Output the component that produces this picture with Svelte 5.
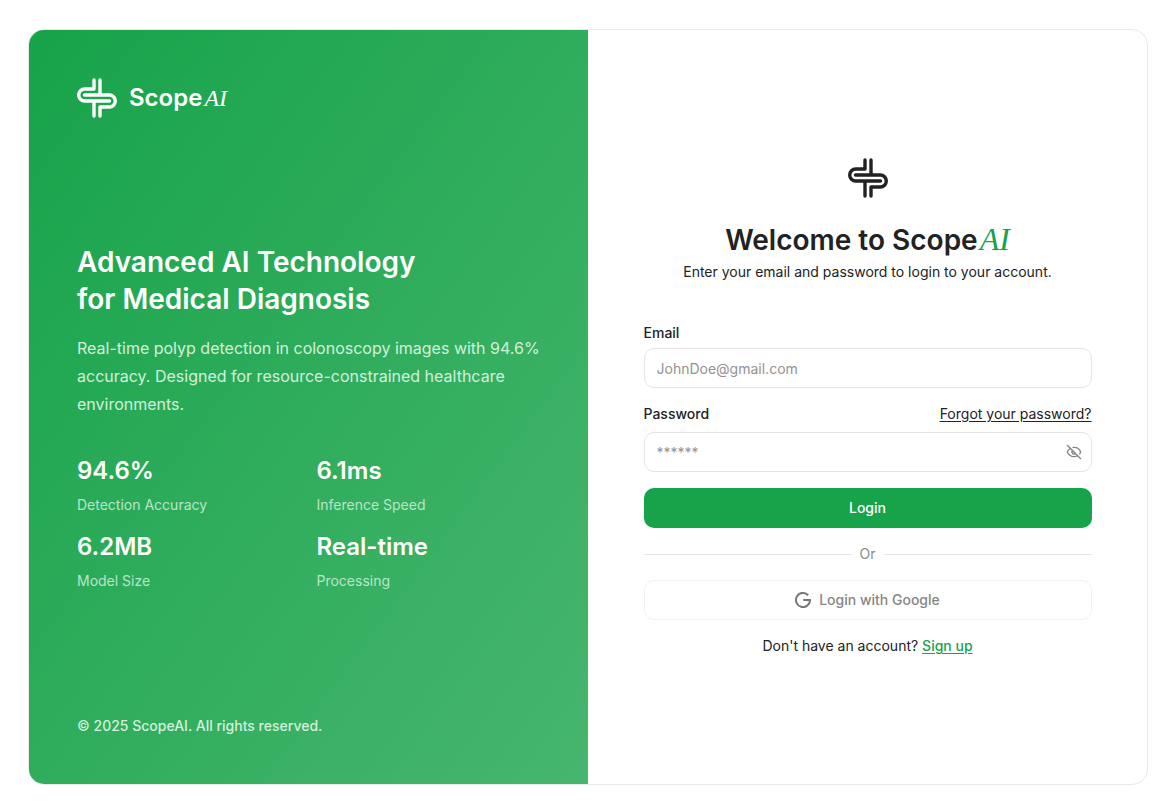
<script>
  let email = $state('');
  let password = $state('');
  let showPassword = $state(false);

  const stats = [
    { value: '94.6%', label: 'Detection Accuracy' },
    { value: '6.1ms', label: 'Inference Speed' },
    { value: '6.2MB', label: 'Model Size' },
    { value: 'Real-time', label: 'Processing' }
  ];

  function handleSubmit(event) {
    event.preventDefault();
  }
</script>

{#snippet logo()}
  <svg class="logo" viewBox="0 0 40 40" fill="none" stroke="currentColor" stroke-width="3.4" stroke-linecap="round" stroke-linejoin="round" aria-hidden="true">
    <path d="M17 2V11H7.7a6 6 0 0 0 0 12H32.5M17 23V38" />
    <path d="M23 2V17M7.5 17H32.3a6 6 0 0 1 0 12H23V38" />
  </svg>
{/snippet}

<main class="page">
  <div class="card">
    <section class="brand">
      <div class="brand-name">
        {@render logo()}
        <span>Scope<em>AI</em></span>
      </div>

      <div class="pitch">
        <h2>Advanced AI Technology<br />for Medical Diagnosis</h2>
        <p>
          Real-time polyp detection in colonoscopy images with 94.6% accuracy. Designed for
          resource-constrained healthcare environments.
        </p>
        <dl class="stats">
          {#each stats as stat}
            <div class="stat">
              <dd>{stat.value}</dd>
              <dt>{stat.label}</dt>
            </div>
          {/each}
        </dl>
      </div>

      <p class="copyright">© 2025 ScopeAI. All rights reserved.</p>
    </section>

    <section class="login">
      <form onsubmit={handleSubmit}>
        <header>
          {@render logo()}
          <h1>Welcome to Scope<em>AI</em></h1>
          <p>Enter your email and password to login to your account.</p>
        </header>

        <div class="field">
          <label class="email-label" for="email">Email</label>
          <input id="email" type="email" placeholder="JohnDoe@gmail.com" bind:value={email} />
        </div>

        <div class="field">
          <div class="field-head">
            <label for="password">Password</label>
            <a class="forgot" href="#forgot">Forgot your password?</a>
          </div>
          <div class="password">
            <input
              id="password"
              type={showPassword ? 'text' : 'password'}
              placeholder="******"
              bind:value={password}
            />
            <button
              class="toggle"
              type="button"
              aria-label={showPassword ? 'Hide password' : 'Show password'}
              onclick={() => (showPassword = !showPassword)}
            >
              <svg viewBox="0 0 24 24" fill="none" stroke="currentColor" stroke-width="2" stroke-linecap="round" stroke-linejoin="round" aria-hidden="true">
                <path d="M10.7 5.1A10.7 10.7 0 0 1 21.9 11.7a1 1 0 0 1 0 .6 10.7 10.7 0 0 1-1.4 2.5" />
                <path d="M14.1 14.2a3 3 0 0 1-4.2-4.3" />
                <path d="M17.5 17.5a10.7 10.7 0 0 1-15.4-5.2 1 1 0 0 1 0-.6 10.7 10.7 0 0 1 4.4-5.2" />
                <path d="M2 2l20 20" />
              </svg>
            </button>
          </div>
        </div>

        <button class="btn primary" type="submit">Login</button>

        <div class="divider">Or</div>

        <button class="btn google" type="button" disabled>
          <svg viewBox="0 0 16 16" fill="none" stroke="currentColor" stroke-width="2" aria-hidden="true">
            <path d="M13.2 3.3A7 7 0 1 0 15 8H8.2" />
          </svg>
          Login with Google
        </button>

        <p class="signup">Don't have an account? <a href="#signup">Sign up</a></p>
      </form>
    </section>
  </div>
</main>

<style>
  :global(body) {
    margin: 0;
    background: #fff;
  }

  .page,
  .page * {
    box-sizing: border-box;
  }

  .page {
    display: flex;
    min-height: 100vh;
    padding: 29px 25px 27px 28px;
    font-family: Inter, 'Liberation Sans', sans-serif;
    font-size: 14px;
    line-height: 20px;
    color: #222;
  }

  h1,
  h2,
  p,
  dl,
  dd {
    margin: 0;
  }

  em {
    margin-left: 2px;
    font-family: 'Liberation Serif', serif;
    font-style: italic;
    font-weight: 400;
  }

  .card {
    flex: 1;
    display: grid;
    grid-template-columns: 1fr 1fr;
    border: 1px solid #e9e9e9;
    border-radius: 16px;
    overflow: hidden;
  }

  .logo {
    display: block;
    width: 40px;
    height: 40px;
  }

  .brand {
    display: flex;
    flex-direction: column;
    justify-content: space-between;
    padding: 48px;
    background: linear-gradient(to bottom right, #17a34a, #47b66e);
    color: #fff;
  }

  .brand-name {
    display: flex;
    align-items: center;
    gap: 12px;
    font-size: 24px;
    font-weight: 600;
    line-height: 32px;
  }

  .brand-name em {
    font-size: 24px;
    line-height: 24px;
  }

  .pitch h2 {
    font-size: 28px;
    font-weight: 600;
    line-height: 37px;
    margin-bottom: 16px;
  }

  .pitch p {
    font-size: 16px;
    line-height: 28px;
    margin-bottom: 37px;
    color: #d3f1dc;
  }

  .stats {
    display: grid;
    grid-template-columns: 1fr 1fr;
    gap: 16px;
  }

  .stat {
    display: flex;
    flex-direction: column;
    gap: 8px;
  }

  .stat dd {
    font-size: 24px;
    font-weight: 600;
    line-height: 32px;
  }

  .stat dt {
    color: #b9e6c8;
  }

  .copyright {
    color: #d3f1dc;
    font-weight: 500;
  }

  .login {
    display: flex;
    align-items: center;
    justify-content: center;
    padding: 48px 24px;
  }

  form {
    display: flex;
    flex-direction: column;
    gap: 16px;
    width: 100%;
    max-width: 448px;
  }

  header {
    display: flex;
    flex-direction: column;
    align-items: center;
    margin-bottom: 28px;
    text-align: center;
  }

  h1 {
    margin: 24px 0 4px;
    font-size: 28px;
    font-weight: 600;
    line-height: 36px;
  }

  h1 em {
    font-size: 32px;
    line-height: 32px;
    color: #17a34a;
  }

  .field {
    display: flex;
    flex-direction: column;
    gap: 8px;
  }

  .field-head {
    display: flex;
    justify-content: space-between;
  }

  label {
    font-weight: 500;
  }

  .email-label {
    line-height: 14px;
  }

  .forgot {
    color: inherit;
    text-underline-offset: 2px;
  }

  input {
    width: 100%;
    height: 40px;
    padding: 0 12px;
    border: 1px solid #e5e5e5;
    border-radius: 10px;
    background: #fff;
    font: inherit;
    color: inherit;
  }

  input::placeholder {
    color: #939393;
    opacity: 1;
  }

  .password {
    position: relative;
  }

  .password input {
    padding-right: 40px;
  }

  .toggle {
    position: absolute;
    top: 0;
    right: 0;
    display: flex;
    align-items: center;
    justify-content: center;
    width: 36px;
    height: 40px;
    padding: 0;
    border: 0;
    background: none;
    color: #858585;
    cursor: pointer;
  }

  .toggle svg,
  .google svg {
    width: 16px;
    height: 16px;
  }

  .btn {
    display: flex;
    align-items: center;
    justify-content: center;
    gap: 8px;
    height: 40px;
    padding: 0 16px;
    border: 0;
    border-radius: 10px;
    font: inherit;
    font-weight: 500;
    cursor: pointer;
  }

  .primary {
    background: #17a34a;
    color: #fff;
  }

  .google {
    border: 1px solid #f2f2f2;
    background: #fff;
    color: #868686;
    cursor: default;
  }

  .google svg {
    color: #777;
  }

  .divider {
    display: flex;
    align-items: center;
    gap: 8px;
    color: #8b8b8b;
  }

  .divider::before,
  .divider::after {
    content: '';
    flex: 1;
    height: 1px;
    background: #e5e5e5;
  }

  .signup {
    text-align: center;
  }

  .signup a {
    color: #17a34a;
    font-weight: 500;
    text-underline-offset: 2px;
  }

  @media (max-width: 800px) {
    .card {
      grid-template-columns: 1fr;
    }

    .brand {
      gap: 48px;
    }
  }
</style>
